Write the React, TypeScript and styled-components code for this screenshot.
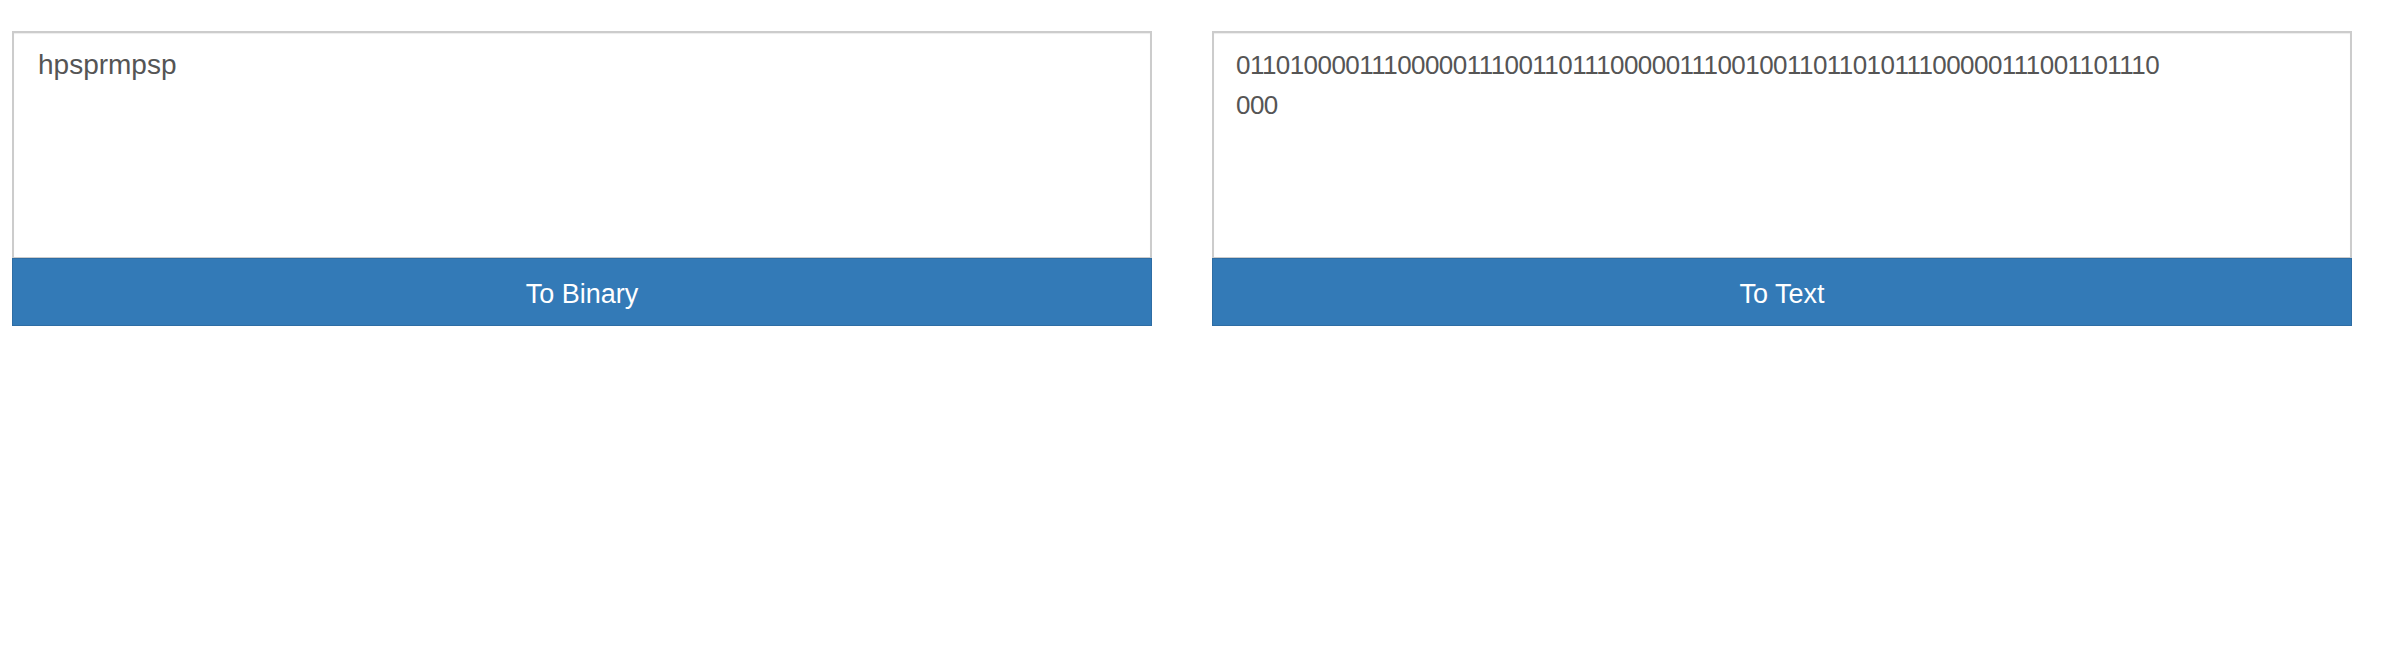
import styled, { createGlobalStyle } from 'styled-components';

const GlobalStyle = createGlobalStyle`
  html, body {
    margin: 0;
    padding: 0;
    background: #fff;
  }

  body {
    font-family: "Liberation Sans", Arial, Helvetica, sans-serif;
    color: #555;
  }
`;

const _Page = styled.main`
  display: grid;
  grid-template-columns: 1140px 1140px;
  column-gap: 60px;
  padding: 31px 42px 0 12px;
  height: 652px;
  box-sizing: border-box;
`;

const _Panel = styled.section`
  display: flex;
  flex-direction: column;
`;

const _Field = styled.textarea<{ $dense?: boolean }>`
  display: block;
  box-sizing: border-box;
  width: 100%;
  height: 227px;
  margin: 0;
  padding: ${(p) => (p.$dense ? '12px 24px 12px 22px' : '12px 24px')};
  border: 2px solid #ccc;
  border-bottom-width: 1px;
  border-radius: 0;
  background: #fff;
  box-shadow: inset 0 1px 1px rgba(0, 0, 0, 0.075);
  color: #555;
  font-family: "Liberation Sans", Arial, Helvetica, sans-serif;
  font-size: ${(p) => (p.$dense ? '26px' : '28px')};
  letter-spacing: ${(p) => (p.$dense ? '-0.55px' : 'normal')};
  line-height: 40px;
  resize: none;
  outline: none;
  overflow: hidden;
`;

const _Button = styled.button`
  display: block;
  box-sizing: border-box;
  width: 100%;
  height: 68px;
  margin: 0;
  padding: 4px 0 0;
  border: 1px solid #2e6da4;
  border-radius: 0;
  background-color: #337ab7;
  color: #fff;
  font-family: "Liberation Sans", Arial, Helvetica, sans-serif;
  font-size: 27px;
  line-height: 1;
  text-align: center;
  cursor: pointer;
`;

const toBinary = (text: string) =>
  text
    .split('')
    .map((c) => c.charCodeAt(0).toString(2).padStart(8, '0'))
    .join('');

// the original box breaks the bit string after 69 digits
const wrapAt = (text: string, size: number) =>
  (text.match(new RegExp(`.{1,${size}}`, 'g')) ?? []).join('\n');

const source = 'hpsprmpsp';

export default function App() {
  return (
    <>
      <GlobalStyle />
      <_Page>
        <_Panel>
          <_Field defaultValue={source} spellCheck={false} />
          <_Button type="button">To Binary</_Button>
        </_Panel>
        <_Panel>
          <_Field $dense defaultValue={wrapAt(toBinary(source), 69)} spellCheck={false} />
          <_Button type="button">To Text</_Button>
        </_Panel>
      </_Page>
    </>
  );
}
